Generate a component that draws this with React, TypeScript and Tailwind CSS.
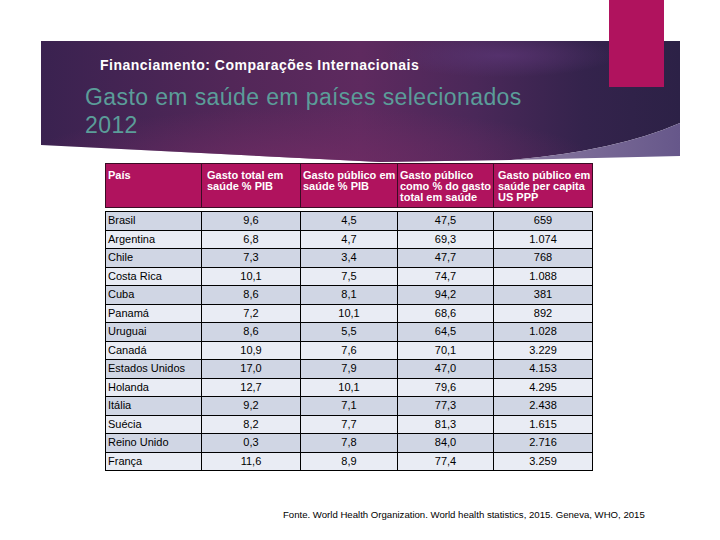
import React from 'react';

type Row = { pais: string; total: string; publico: string; pct: string; capita: string };

const rows: Row[] = [
  { pais: 'Brasil', total: '9,6', publico: '4,5', pct: '47,5', capita: '659' },
  { pais: 'Argentina', total: '6,8', publico: '4,7', pct: '69,3', capita: '1.074' },
  { pais: 'Chile', total: '7,3', publico: '3,4', pct: '47,7', capita: '768' },
  { pais: 'Costa Rica', total: '10,1', publico: '7,5', pct: '74,7', capita: '1.088' },
  { pais: 'Cuba', total: '8,6', publico: '8,1', pct: '94,2', capita: '381' },
  { pais: 'Panamá', total: '7,2', publico: '10,1', pct: '68,6', capita: '892' },
  { pais: 'Uruguai', total: '8,6', publico: '5,5', pct: '64,5', capita: '1.028' },
  { pais: 'Canadá', total: '10,9', publico: '7,6', pct: '70,1', capita: '3.229' },
  { pais: 'Estados Unidos', total: '17,0', publico: '7,9', pct: '47,0', capita: '4.153' },
  { pais: 'Holanda', total: '12,7', publico: '10,1', pct: '79,6', capita: '4.295' },
  { pais: 'Itália', total: '9,2', publico: '7,1', pct: '77,3', capita: '2.438' },
  { pais: 'Suécia', total: '8,2', publico: '7,7', pct: '81,3', capita: '1.615' },
  { pais: 'Reino Unido', total: '0,3', publico: '7,8', pct: '84,0', capita: '2.716' },
  { pais: 'França', total: '11,6', publico: '8,9', pct: '77,4', capita: '3.259' },
];

const Cols = () => (
  <colgroup>
    <col className="w-[96px]" />
    <col className="w-[99px]" />
    <col className="w-[97px]" />
    <col className="w-[96px]" />
    <col className="w-[99px]" />
  </colgroup>
);

// decorative banner background (slide theme shape)
const BannerShape = () => (
  <svg className="absolute inset-0 w-full h-full" viewBox="0 0 639 122" preserveAspectRatio="none">
    <defs>
      <linearGradient id="bg" x1="0" y1="0" x2="1" y2="0">
        <stop offset="0" stopColor="#3a2250" />
        <stop offset="0.3" stopColor="#522758" />
        <stop offset="0.5" stopColor="#5e2a5f" />
        <stop offset="0.68" stopColor="#4a2859" />
        <stop offset="0.85" stopColor="#34234c" />
        <stop offset="1" stopColor="#2c2146" />
      </linearGradient>
      <radialGradient id="glow" cx="0.42" cy="1" r="0.45">
        <stop offset="0" stopColor="#702c64" stopOpacity="0.8" />
        <stop offset="1" stopColor="#702c64" stopOpacity="0" />
      </radialGradient>
      <radialGradient id="hl" cx="0.72" cy="0.12" r="0.18">
        <stop offset="0" stopColor="#5a3574" stopOpacity="0.75" />
        <stop offset="1" stopColor="#5a3574" stopOpacity="0" />
      </radialGradient>
      <linearGradient id="wedge" x1="0" y1="0" x2="1" y2="0">
        <stop offset="0" stopColor="#8a7aa0" />
        <stop offset="1" stopColor="#66578a" />
      </linearGradient>
    </defs>
    <path d="M0 0 H639 V82 Q575 110 470 119 L339 121 L0 104 Z" fill="url(#bg)" />
    <path d="M0 0 H639 V82 Q575 110 470 119 L339 121 L0 104 Z" fill="url(#glow)" />
    <path d="M0 0 H639 V82 Q575 110 470 119 L339 121 L0 104 Z" fill="url(#hl)" />
    <path d="M639 82 Q575 110 470 119 L639 115 Z" fill="url(#wedge)" />
  </svg>
);

export default function App() {
  return (
    <div className="relative w-[720px] h-[540px] bg-white overflow-hidden font-['Liberation_Sans',Arial,sans-serif]">
      {/* Banner */}
      <div className="relative ml-[41px] mt-[41px] w-[639px] h-[122px]">
        <BannerShape />
        <div className="relative pt-[16px]">
          <p className="pl-[59px] text-[14px] leading-[16px] font-bold tracking-[0.5px] text-white">
            Financiamento: Comparações Internacionais
          </p>
          <h1 className="pl-[44px] mt-[10px] text-[23px] leading-[28px] tracking-[0.4px] text-[#5b9d99]">
            Gasto em saúde em países selecionados
            <br />
            2012
          </h1>
        </div>
      </div>

      {/* Pink accent */}
      <div className="absolute left-[609px] top-0 w-[55px] h-[87px] bg-[#b0135e]" />

      {/* Table */}
      <div className="ml-[105px] w-[487px]">
        <table className="table-fixed w-[487px] border-collapse">
          <Cols />
          <thead>
            <tr className="h-[44px] bg-[#b0135e] text-white text-[11px] leading-[11px] font-bold align-top">
              <th className="border border-[#3a0c24] pl-[2px] pt-[6px] text-left font-bold">País</th>
              <th className="border border-[#3a0c24] pl-[5px] pt-[6px] text-left font-bold">
                Gasto total em<br />saúde % PIB
              </th>
              <th className="border border-[#3a0c24] pl-[2px] pt-[6px] text-left font-bold whitespace-nowrap">
                Gasto público em<br />saúde % PIB
              </th>
              <th className="border border-[#3a0c24] pl-[2px] pt-[6px] text-left font-bold whitespace-nowrap">
                Gasto público<br />como % do gasto<br />total em saúde
              </th>
              <th className="border border-[#3a0c24] pl-[4px] pt-[6px] text-left font-bold whitespace-nowrap">
                Gasto público em<br />saúde per capita<br />US PPP
              </th>
            </tr>
          </thead>
        </table>
        <table className="table-fixed w-[487px] border-collapse mt-[3px]">
          <Cols />
          <tbody>
            {rows.map((r, i) => (
              <tr
                key={r.pais}
                className={`h-[18.5px] text-[11px] leading-[13px] text-black ${i % 2 === 0 ? 'bg-[#d0d6e4]' : 'bg-[#e9ecf4]'}`}
              >
                <td className="border border-black pl-[2px] text-left">{r.pais}</td>
                <td className="border border-black text-center">{r.total}</td>
                <td className="border border-black text-center">{r.publico}</td>
                <td className="border border-black text-center">{r.pct}</td>
                <td className="border border-black text-center">{r.capita}</td>
              </tr>
            ))}
          </tbody>
        </table>
      </div>

      {/* Source */}
      <p className="ml-[283px] mt-[38px] text-[9.6px] leading-[11px] text-black whitespace-nowrap">
        Fonte. World Health Organization. World health statistics, 2015. Geneva, WHO, 2015
      </p>
    </div>
  );
}
